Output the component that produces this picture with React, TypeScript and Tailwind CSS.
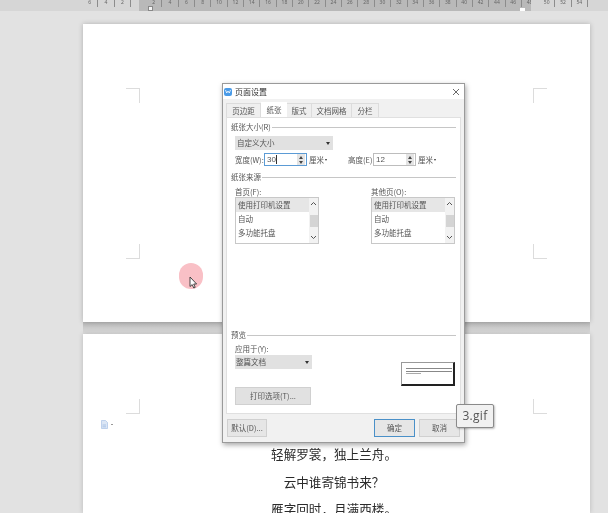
import React from "react";

const cjk = { fontFamily: '"Noto Sans CJK SC", "Liberation Sans", sans-serif' };

function Corner({ side, v }: { side: "l" | "r"; v: "t" | "b" }) {
  const border =
    side === "l"
      ? v === "t"
        ? "border-r border-b"
        : "border-r border-t"
      : v === "t"
      ? "border-l border-b"
      : "border-l border-t";
  return <div className={`w-[14px] h-[15px] border-[#dcdcdc] ${border}`} />;
}

function Ruler() {
  const left = [6, 4, 2];
  const mid: number[] = [];
  for (let n = 2; n <= 48; n += 2) mid.push(n);
  const right = [50, 52, 54];
  const cell = (n: number) => (
    <div
      key={n}
      className="w-[16.35px] shrink-0 h-[7px] border-r border-[#8c8c8c] flex justify-center items-start text-[5px] leading-[5px] text-[#666]"
    >
      {n}
    </div>
  );
  return (
    <div className="h-[11px] flex bg-[#d6d6d6] relative overflow-hidden">
      <div className="flex w-[139px] justify-end shrink-0 pr-[8px]">{left.map(cell)}</div>
      <div className="flex w-[392px] pl-[7px] bg-[#b9b9b9] shrink-0 overflow-hidden">{mid.map(cell)}</div>
      <div className="flex shrink-0 pl-[8px]">{right.map(cell)}</div>
      <div className="absolute left-[148px] top-[6px] w-[5px] h-[5px] bg-[#f4f4f4] border border-[#888]" />
      <div className="absolute left-[520px] top-[8px] w-[5px] h-[3px] bg-white" />
    </div>
  );
}

function Section({ title, children, className = "" }: { title: string; children?: React.ReactNode; className?: string }) {
  return (
    <div className={className}>
      <div className="flex items-center gap-[1px] h-[10px] text-[7.5px] leading-[10px] text-[#555]">
        <span className="shrink-0">{title}</span>
        <div className="flex-1 h-px bg-[#c6c6c6]" />
      </div>
      {children}
    </div>
  );
}

function Spin({ value, active }: { value: React.ReactNode; active?: boolean }) {
  return (
    <div
      className={`w-[43px] h-[13px] shrink-0 flex items-center bg-white border ${
        active ? "border-[#5b9bd5]" : "border-[#bdbdbd]"
      }`}
    >
      <div className="flex-1 pl-[2px] text-[8px] leading-[11px] text-[#555] flex items-center" style={{ fontFamily: '"Liberation Sans", sans-serif' }}>
        {value}
      </div>
      <div className="w-[8px] h-[11px] mr-px bg-[#e4e4e4] flex flex-col items-center justify-between py-[1.5px]">
        <div className="w-0 h-0 border-x-[2px] border-x-transparent border-b-[3px] border-b-[#444]" />
        <div className="w-0 h-0 border-x-[2px] border-x-transparent border-t-[3px] border-t-[#444]" />
      </div>
    </div>
  );
}

function Tri() {
  return <div className="w-0 h-0 border-x-[2.5px] border-x-transparent border-t-[3px] border-t-[#333]" />;
}

function PaperList() {
  return (
    <div className="w-[84px] h-[47px] bg-white border border-[#c8c8c8] flex text-[7.5px] leading-[14px] text-[#555]">
      <div className="flex-1 min-w-0 flex flex-col">
        <div className="h-[14px] bg-[#e6e6e6] pl-[2px]">使用打印机设置</div>
        <div className="h-[14px] pl-[2px]">自动</div>
        <div className="h-[14px] pl-[2px]">多功能托盘</div>
      </div>
      <div className="w-[9px] flex flex-col items-center justify-between text-[#555] py-[3px] bg-[#f2f2f2]">
        <svg width="7" height="5" viewBox="0 0 7 5"><path d="M1 4 L3.5 1.5 L6 4" fill="none" stroke="#555" strokeWidth="1" /></svg>
        <div className="w-[8px] h-[12px] bg-[#d4d4d4]" />
        <svg width="7" height="5" viewBox="0 0 7 5"><path d="M1 1 L3.5 3.5 L6 1" fill="none" stroke="#555" strokeWidth="1" /></svg>
      </div>
    </div>
  );
}

function Dialog() {
  return (
    <div
      className="absolute left-[222px] top-[83px] w-[243px] h-[360px] bg-[#f1f1f1] border border-[#9a9a9a] shadow-[1px_2px_5px_rgba(0,0,0,0.35)] flex flex-col"
      style={cjk}
    >
      <div className="h-[15px] bg-white flex items-center pl-[1px] pr-[4px] shrink-0">
        <div className="w-[8px] h-[8px] rounded-[2px] bg-[#4a9be8] mr-[3px] flex items-center justify-center">
          <svg width="6" height="5" viewBox="0 0 6 5"><path d="M0.5 1 L1.7 4 L3 2 L4.3 4 L5.5 1" fill="none" stroke="#fff" strokeWidth="0.8" /></svg>
        </div>
        <span className="text-[8px] leading-[10px] text-[#333]">页面设置</span>
        <svg className="ml-auto" width="8" height="8" viewBox="0 0 8 8"><path d="M1 1 L7 7 M7 1 L1 7" stroke="#444" strokeWidth="0.8" /></svg>
      </div>
      <div className="flex pl-[3px] pt-[4px] h-[18px] shrink-0 text-[7.5px] leading-[10px] text-[#555]">
        <div className="w-[35px] flex items-center justify-center bg-[#efefef] border border-[#dcdcdc] border-b-0">页边距</div>
        <div className="w-[26px] -mt-px flex items-center justify-center bg-white">纸张</div>
        <div className="w-[25px] flex items-center justify-center bg-[#efefef] border border-[#dcdcdc] border-b-0 border-l-0">版式</div>
        <div className="w-[40px] flex items-center justify-center bg-[#efefef] border border-[#dcdcdc] border-b-0 border-l-0">文档网格</div>
        <div className="w-[27px] flex items-center justify-center bg-[#efefef] border border-[#dcdcdc] border-b-0 border-l-0">分栏</div>
      </div>
      <div className="mx-[3px] w-[235px] h-[297px] bg-white border border-[#e0e0e0] shrink-0 pl-[4px] pr-[4px] pt-[4px] flex flex-col">
        <Section title="纸张大小(R)">
          <div className="ml-[4px] mt-[4px] w-[98px] h-[14px] bg-[#e1e1e1] flex items-center pl-[2px] pr-[3px] text-[7.5px] text-[#555] justify-between">
            <span>自定义大小</span>
            <Tri />
          </div>
          <div className="ml-[4px] mt-[3px] flex items-center text-[7.5px] text-[#555] h-[13px] whitespace-nowrap">
            <span className="w-[29px] shrink-0">宽度(W):</span>
            <Spin value={<><span>30</span><span className="inline-block w-px h-[9px] bg-[#333]" /></>} active />
            <span className="ml-[2px]">厘米</span>
            <div className="ml-[1px] w-0 h-0 border-x-[1.5px] border-x-transparent border-t-[2px] border-t-[#333]" />
            <span className="ml-[21px] w-[25px] shrink-0">高度(E):</span>
            <Spin value="12" />
            <span className="ml-[2px]">厘米</span>
            <div className="ml-[1px] w-0 h-0 border-x-[1.5px] border-x-transparent border-t-[2px] border-t-[#333]" />
          </div>
        </Section>
        <Section title="纸张来源" className="mt-[6px]">
          <div className="ml-[4px] mt-[5px] mr-[1px] flex justify-between text-[7.5px] leading-[10px] text-[#555]">
            <div className="w-[84px]">
              <div className="h-[10px]">首页(F):</div>
              <PaperList />
            </div>
            <div className="w-[84px]">
              <div className="h-[10px]">其他页(O):</div>
              <PaperList />
            </div>
          </div>
        </Section>
        <Section title="预览" className="mt-[86px]">
          <div className="ml-[4px] mt-[4px] text-[7.5px] leading-[10px] text-[#555]">应用于(Y):</div>
          <div className="flex items-start mr-[1px] ml-[4px]">
            <div className="flex flex-col w-[77px]">
              <div className="mt-[1px] h-[14px] bg-[#e1e1e1] flex items-center justify-between pl-[1px] pr-[3px] text-[7.5px] text-[#555]">
                <span>整篇文档</span>
                <Tri />
              </div>
              <div className="mt-[18px] w-[76px] h-[18px] bg-[#e1e1e1] border border-[#d0d0d0] flex items-center justify-center text-[7.5px] text-[#555]">
                打印选项(T)...
              </div>
            </div>
            <div className="ml-auto mt-[8px] w-[54px] h-[24px] bg-white border border-[#999] border-r-2 border-b-2 border-r-[#222] border-b-[#222] pt-[5px] pl-[4px] pr-[1px] flex flex-col gap-[1.5px]">
              <div className="h-px bg-[#888]" />
              <div className="h-px bg-[#888]" />
              <div className="h-px bg-[#aaa] w-[15px]" />
            </div>
          </div>
        </Section>
      </div>
      <div className="flex-1 flex items-start pt-[5px] pl-[4px] pr-[4px] text-[7.5px] text-[#555]">
        <div className="w-[40px] h-[18px] bg-[#e6e6e6] border border-[#d0d0d0] flex items-center justify-center">默认(D)...</div>
        <div className="ml-auto w-[41px] h-[18px] bg-[#e6e6e6] border border-[#4a90c8] flex items-center justify-center">确定</div>
        <div className="ml-[4px] w-[41px] h-[18px] bg-[#e6e6e6] border border-[#d0d0d0] flex items-center justify-center">取消</div>
      </div>
    </div>
  );
}

export default function App() {
  return (
    <div className="relative w-[608px] h-[513px] overflow-hidden bg-[#e2e2e2] blur-[0.3px]">
      <Ruler />
      <div className="pl-[83px] pt-[13px] w-[590px]">
        <div className="relative w-[507px] h-[298px] bg-white shadow-[0_0_5px_rgba(0,0,0,0.22)] flex flex-col justify-between">
          <div className="flex justify-between px-[43px] pt-[64px]">
            <Corner side="l" v="b" />
            <Corner side="r" v="b" />
          </div>
          <div className="flex justify-between px-[43px] pb-[63px]">
            <Corner side="l" v="t" />
            <Corner side="r" v="t" />
          </div>
        </div>
        <div className="h-[12px] w-[507px] bg-gradient-to-b from-[#b9b9b9] to-[#dedede]" />
        <div className="relative w-[507px] h-[179px] bg-white shadow-[0_0_5px_rgba(0,0,0,0.18)] overflow-hidden">
          <div className="flex justify-between px-[43px] pt-[65px]">
            <Corner side="l" v="t" />
            <Corner side="r" v="t" />
          </div>
          <div className="ml-[18px] mt-[4px] flex items-center h-[12px] gap-[3px]">
            <svg width="7" height="9" viewBox="0 0 7 9">
              <path d="M0.5 0.5 H4.5 L6.5 2.5 V8.5 H0.5 Z" fill="#dbe6f5" stroke="#a9c3e6" strokeWidth="0.7" />
              <path d="M1.5 5 H5 M1.5 6.8 H5" stroke="#8fb0de" strokeWidth="0.6" />
            </svg>
            <div className="w-[2px] h-px bg-[#999]" />
          </div>
          <div
            className="mt-[10px] pl-[1px] w-[501px] flex flex-col items-center text-[12.6px] leading-[27.5px] text-[#2b2b2b]"
            style={cjk}
          >
            <div>轻解罗裳，独上兰舟。</div>
            <div>云中谁寄锦书来？</div>
            <div>雁字回时，月满西楼。</div>
          </div>
        </div>
      </div>

      <div className="absolute left-[179px] top-[263px] w-[24px] h-[26px] rounded-full bg-[#f9c0c6]" />
      <svg className="absolute left-[189px] top-[276px]" width="9" height="13" viewBox="0 0 9 13">
        <path d="M1 1 V10.5 L3.2 8.6 L4.8 12 L6.2 11.3 L4.7 8 H7.6 Z" fill="#fff" stroke="#333" strokeWidth="0.9" />
      </svg>

      <Dialog />

      <div
        className="absolute left-[456px] top-[404px] w-[38px] h-[24px] bg-[#f1f1f1] border border-[#8a8a8a] rounded-[2px] shadow-[1px_1px_2px_rgba(0,0,0,0.25)] flex items-center justify-center text-[12px] tracking-[0.3px] text-[#555]"
        style={{ fontFamily: '"Open Sans", sans-serif' }}
      >
        3.gif
      </div>
    </div>
  );
}
